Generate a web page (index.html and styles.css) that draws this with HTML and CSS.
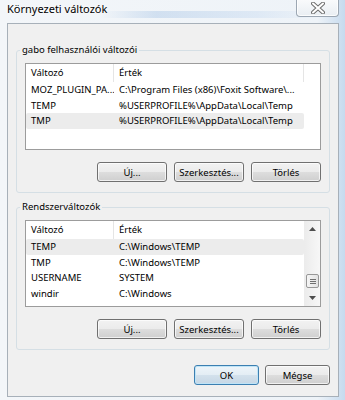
FILE: index.html
```html
<!doctype html>
<html lang="hu">
<head>
    <meta charset="utf-8">
    <title>Környezeti változók</title>
    <link rel="stylesheet" href="styles.css">
</head>
<body>
    <div class="window">
        <div class="titlebar">
            <span class="title">Környezeti változók</span>
            <button class="close" aria-label="Bezárás">
                <svg width="14" height="12" viewBox="0 0 14 12">
                    <path d="M2 1.5 L12 10.5 M12 1.5 L2 10.5" stroke="#6d6d6d" stroke-width="4" stroke-linecap="round"/>
                    <path d="M2 1.5 L12 10.5 M12 1.5 L2 10.5" stroke="#fff" stroke-width="2" stroke-linecap="round"/>
                </svg>
            </button>
        </div>

        <div class="client">
            <!-- user variables -->
            <fieldset class="group">
                <legend>gabo felhasználói változói</legend>
                <div class="list">
                    <div class="list-body">
                        <div class="list-head">
                            <span>Változó</span>
                            <span>Érték</span>
                            <span></span>
                        </div>
                        <div class="row"><span>MOZ_PLUGIN_PA...</span><span>C:\Program Files (x86)\Foxit Software\...</span></div>
                        <div class="row"><span>TEMP</span><span>%USERPROFILE%\AppData\Local\Temp</span></div>
                        <div class="row selected"><span>TMP</span><span>%USERPROFILE%\AppData\Local\Temp</span></div>
                    </div>
                </div>
                <div class="actions">
                    <button class="btn">Új...</button>
                    <button class="btn">Szerkesztés...</button>
                    <button class="btn">Törlés</button>
                </div>
            </fieldset>

            <!-- system variables -->
            <fieldset class="group group-system">
                <legend>Rendszerváltozók</legend>
                <div class="list">
                    <div class="list-body">
                        <div class="list-head">
                            <span>Változó</span>
                            <span>Érték</span>
                        </div>
                        <div class="row selected"><span>TEMP</span><span>C:\Windows\TEMP</span></div>
                        <div class="row"><span>TMP</span><span>C:\Windows\TEMP</span></div>
                        <div class="row"><span>USERNAME</span><span>SYSTEM</span></div>
                        <div class="row"><span>windir</span><span>C:\Windows</span></div>
                    </div>
                    <div class="scrollbar">
                        <div class="arrow">
                            <svg width="7" height="4" viewBox="0 0 7 4"><polygon points="0,4 3.5,0 7,4" fill="#4d4d4d"/></svg>
                        </div>
                        <div class="track"></div>
                        <div class="thumb"><i></i><i></i><i></i></div>
                        <div class="arrow arrow-down">
                            <svg width="7" height="4" viewBox="0 0 7 4"><polygon points="0,0 7,0 3.5,4" fill="#4d4d4d"/></svg>
                        </div>
                    </div>
                </div>
                <div class="actions">
                    <button class="btn">Új...</button>
                    <button class="btn">Szerkesztés...</button>
                    <button class="btn">Törlés</button>
                </div>
            </fieldset>

            <div class="dialog-actions">
                <button class="btn btn-small btn-default">OK</button>
                <button class="btn btn-small">Mégse</button>
            </div>
        </div>
    </div>
</body>
</html>
```

FILE: styles.css
```css
html, body {
    margin: 0;
    padding: 0;
}

body {
    width: 345px;
    height: 400px;
    overflow: hidden;
    font-family: "Noto Sans", "Open Sans", sans-serif;
    font-size: 9.5px;
    color: #000;
    background: linear-gradient(90deg, #f3f6f9 0%, #eef3f8 92%, #c6daee 100%);
}

/* glass frame */
.window {
    display: flex;
    flex-direction: column;
    height: 400px;
    padding: 0 6px 3px 7px;
    box-sizing: border-box;
}

.titlebar {
    display: flex;
    align-items: flex-start;
    height: 23px;
    background: linear-gradient(90deg, rgba(255,255,255,0) 28%, rgba(150,185,225,0.35) 45%, rgba(170,200,235,0.25) 75%, rgba(255,255,255,0) 95%) 0 11px / 100% 7px no-repeat;
}

.title {
    font-size: 11px;
    line-height: 18px;
    text-shadow: 0 0 6px #fff, 0 0 3px #fff;
}

.close {
    margin-left: auto;
    width: 43px;
    height: 18px;
    margin-top: -1px;
    padding: 0;
    display: flex;
    align-items: center;
    justify-content: center;
    border: 1px solid #9ca7b3;
    border-top: none;
    border-radius: 0 0 4px 4px;
    background: linear-gradient(#fafbfc, #e9eef3);
    box-shadow: inset 0 0 0 1px rgba(255,255,255,0.8);
}

.client {
    flex: 1;
    background: #f0f0f0;
    border: 1px solid #a7b0b9;
    padding: 19px 8px 0 8px;
}

/* group boxes */
.group {
    margin: 0;
    padding: 6px 8px 10px;
    border: 1px solid #d5dfe5;
    border-radius: 3px;
    min-width: 0;
}

.group legend {
    margin-left: -5px;
    padding: 0 2px;
    line-height: 14px;
}

.group-system {
    margin-top: 7px;
}

/* list views */
.list {
    display: flex;
    height: 87px;
    box-sizing: border-box;
    border: 1px solid #9c9c9c;
    background: #fff;
}

.list-body {
    flex: 1;
}

.list-head {
    display: grid;
    grid-template-columns: 88px 190px 1fr;
    height: 18px;
    line-height: 18px;
}

.list-head span {
    padding-left: 5px;
    border-right: 1px solid #e5e5e5;
}

.list-head span:last-child {
    border-right: none;
}

.row {
    display: grid;
    grid-template-columns: 88px 190px;
    width: 278px;
    height: 15.5px;
    line-height: 15.5px;
    white-space: nowrap;
}

.row span {
    padding-left: 5px;
    overflow: hidden;
}

.row.selected {
    background: #ececec;
    border-radius: 2px;
}

/* scrollbar of the system list */
.scrollbar {
    display: flex;
    flex-direction: column;
    width: 15px;
    background: linear-gradient(90deg, #ececec, #f7f7f7);
    border-left: 1px solid #ececec;
}

.arrow {
    height: 16px;
    display: flex;
    align-items: center;
    justify-content: center;
}

.track {
    flex: 1;
}

.thumb {
    height: 14px;
    margin: 0 1px 2px 1px;
    box-sizing: border-box;
    border: 1px solid #979797;
    border-radius: 2px;
    background: linear-gradient(90deg, #f5f5f5, #e2e2e2);
    display: flex;
    flex-direction: column;
    align-items: center;
    justify-content: center;
    gap: 1px;
}

.thumb i {
    display: block;
    width: 6px;
    height: 1px;
    background: #6f6f6f;
}

/* buttons */
.actions {
    display: flex;
    justify-content: flex-end;
    gap: 7px;
    margin-top: 12px;
}

.btn {
    width: 70px;
    height: 20px;
    padding: 0;
    font: inherit;
    color: #000;
    border: 1px solid #707070;
    border-radius: 3px;
    background: linear-gradient(#f2f2f2 0%, #ebebeb 50%, #dddddd 51%, #cfcfcf 100%);
    box-shadow: inset 0 0 0 1px rgba(255,255,255,0.7);
}

.dialog-actions {
    display: flex;
    justify-content: flex-end;
    gap: 6px;
    margin-top: 15px;
}

.btn-small {
    width: 65px;
}

.btn-default {
    border-color: #3c7fb1;
    background: linear-gradient(#eef5fa 0%, #e3edf4 50%, #d3e1ec 51%, #c6d7e5 100%);
    box-shadow: inset 0 0 0 1px #bfe4f7;
}
```
